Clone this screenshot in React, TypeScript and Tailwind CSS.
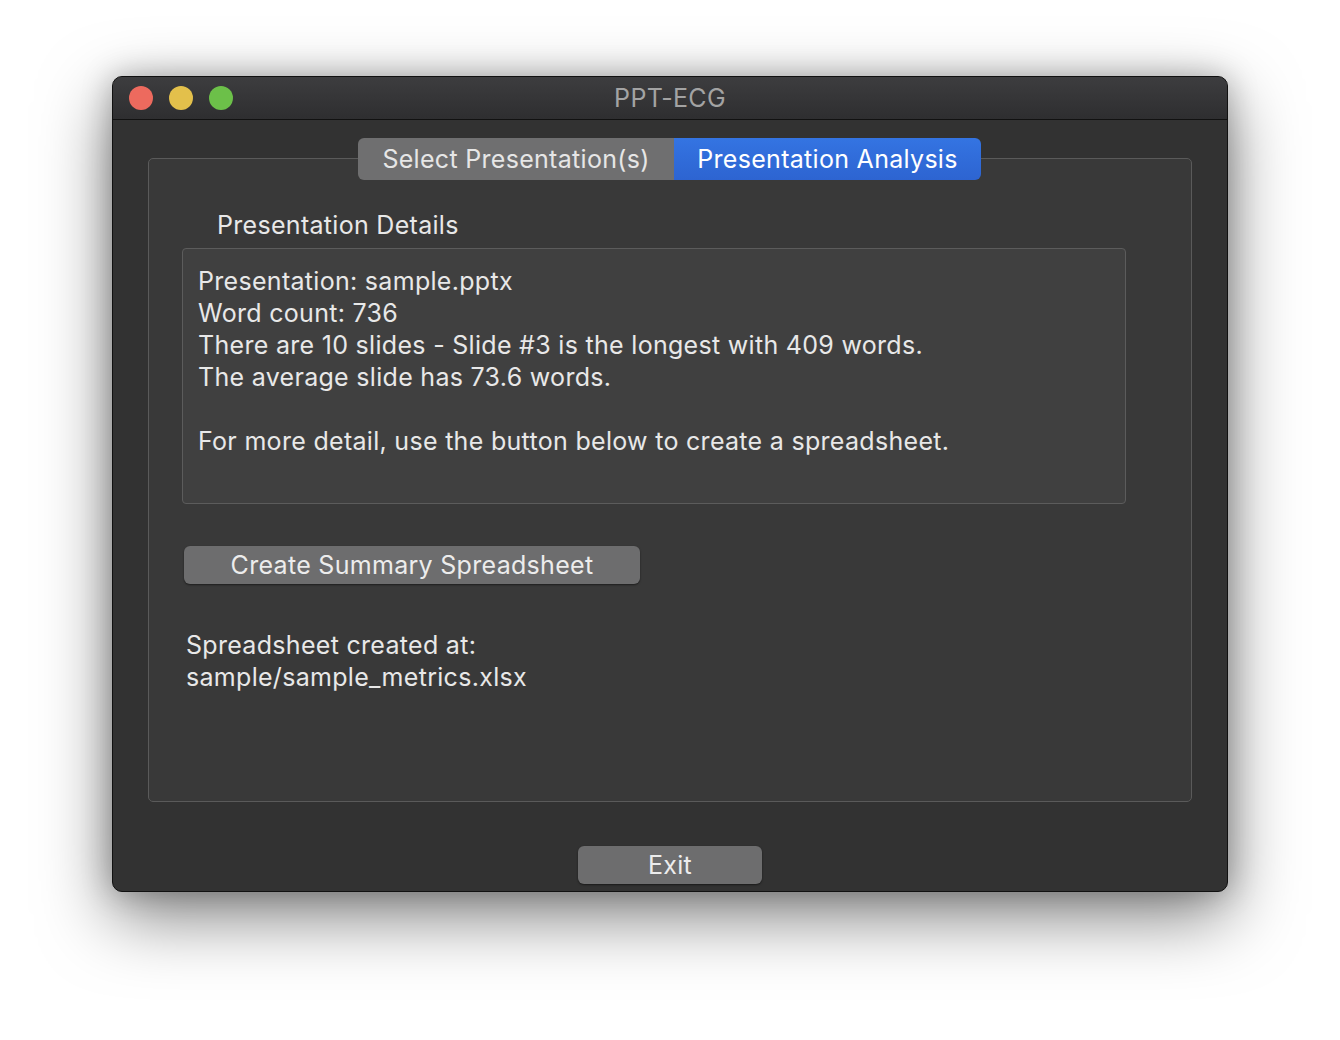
import React from "react";

const App = () => {
  return (
    <div
      className="w-[1340px] h-[1040px] bg-white pt-[76px] pl-[112px]"
      style={{ fontFamily: "Inter, 'Noto Sans', sans-serif" }}
    >
      <div className="w-[1116px] h-[816px] rounded-[10px] border border-[#111] bg-[#323232] shadow-[0_24px_70px_rgba(0,0,0,0.5),0_0_30px_rgba(0,0,0,0.25)] overflow-hidden flex flex-col">
        {/* title bar */}
        <div className="relative h-[43px] flex items-center bg-gradient-to-b from-[#3d3d3f] to-[#2e2e30] border-b border-[#111]">
          <div className="flex gap-4 pl-[16px]">
            <span className="w-6 h-6 rounded-full bg-[#ed6a5e]" />
            <span className="w-6 h-6 rounded-full bg-[#e3c04b]" />
            <span className="w-6 h-6 rounded-full bg-[#6cc049]" />
          </div>
          <div className="absolute inset-0 flex items-center justify-center text-[25px] tracking-[0.3px] text-[#a3a3a3] pt-[2px]">
            PPT-ECG
          </div>
        </div>

        {/* body */}
        <div className="flex-1 flex flex-col px-[35px] pt-[38px] text-[25px] tracking-[0.3px]">
          <div className="relative h-[644px] rounded-[5px] border border-[#5a5a5a] bg-[#393939]">
            <div className="absolute -top-[21px] left-[209px] flex h-[42px] rounded-[6px] overflow-hidden">
              <div className="w-[316px] bg-[#6f6f70] text-[#e6e6e6] flex items-center justify-center pt-[1px]">
                Select Presentation(s)
              </div>
              <div className="w-[307px] bg-gradient-to-b from-[#3474e2] to-[#2d64d1] text-white flex items-center justify-center pt-[1px]">
                Presentation Analysis
              </div>
            </div>

            <div className="pt-[50px] pl-[33px] pr-[65px] text-[#e8e8e8]">
              <div className="pl-[35px] leading-[32px]">Presentation Details</div>
              <div className="mt-[7px] h-[256px] rounded-[4px] border border-[#5c5c5c] bg-[#404040] px-[15px] pt-[16px] leading-[32px]">
                <div>Presentation: sample.pptx</div>
                <div>Word count: 736</div>
                <div>There are 10 slides - Slide #3 is the longest with 409 words.</div>
                <div>The average slide has 73.6 words.</div>
                <div>&nbsp;</div>
                <div>For more detail, use the button below to create a spreadsheet.</div>
              </div>

              <button className="mt-[42px] ml-[2px] w-[456px] h-[38px] rounded-[6px] bg-[#6d6d6e] shadow-[0_1px_2px_rgba(0,0,0,0.5)] text-[#ececec] flex items-center justify-center pt-[2px]">
                Create Summary Spreadsheet
              </button>

              <div className="mt-[45px] pl-[4px] leading-[32px]">
                <div>Spreadsheet created at:</div>
                <div>sample/sample_metrics.xlsx</div>
              </div>
            </div>
          </div>

          <div className="flex justify-center pt-[44px]">
            <button className="w-[184px] h-[38px] rounded-[6px] bg-[#6d6d6e] shadow-[0_1px_2px_rgba(0,0,0,0.5)] text-[#ececec] flex items-center justify-center pt-[1px]">
              Exit
            </button>
          </div>
        </div>
      </div>
    </div>
  );
};

export default App;
